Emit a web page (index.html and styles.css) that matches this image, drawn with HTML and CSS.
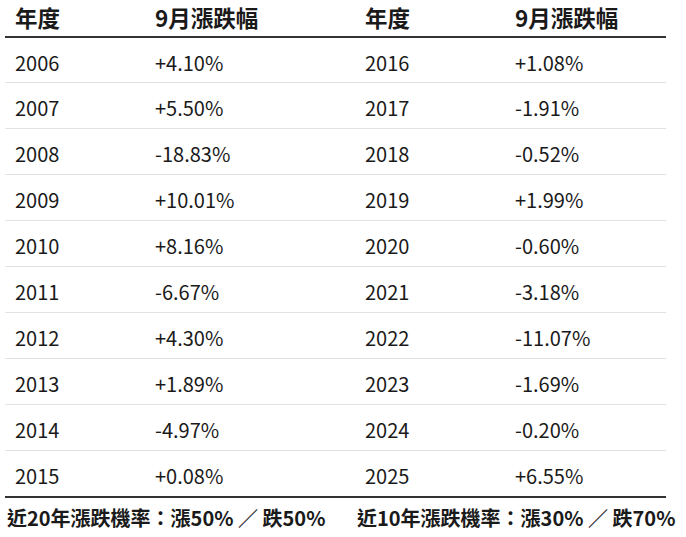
FILE: index.html
```html
<!DOCTYPE html>
<html lang="zh-Hant">
<head>
<meta charset="utf-8">
<title>9月漲跌幅</title>
<link rel="stylesheet" href="styles.css">
</head>
<body>
<div class="table">
  <div class="row head">
    <div class="cell">年度</div><div class="cell">9月漲跌幅</div><div class="cell">年度</div><div class="cell">9月漲跌幅</div>
  </div>
  <div class="row"><div class="cell">2006</div><div class="cell">+4.10%</div><div class="cell">2016</div><div class="cell">+1.08%</div></div>
  <div class="row"><div class="cell">2007</div><div class="cell">+5.50%</div><div class="cell">2017</div><div class="cell">-1.91%</div></div>
  <div class="row"><div class="cell">2008</div><div class="cell">-18.83%</div><div class="cell">2018</div><div class="cell">-0.52%</div></div>
  <div class="row"><div class="cell">2009</div><div class="cell">+10.01%</div><div class="cell">2019</div><div class="cell">+1.99%</div></div>
  <div class="row"><div class="cell">2010</div><div class="cell">+8.16%</div><div class="cell">2020</div><div class="cell">-0.60%</div></div>
  <div class="row"><div class="cell">2011</div><div class="cell">-6.67%</div><div class="cell">2021</div><div class="cell">-3.18%</div></div>
  <div class="row"><div class="cell">2012</div><div class="cell">+4.30%</div><div class="cell">2022</div><div class="cell">-11.07%</div></div>
  <div class="row"><div class="cell">2013</div><div class="cell">+1.89%</div><div class="cell">2023</div><div class="cell">-1.69%</div></div>
  <div class="row"><div class="cell">2014</div><div class="cell">-4.97%</div><div class="cell">2024</div><div class="cell">-0.20%</div></div>
  <div class="row last"><div class="cell">2015</div><div class="cell">+0.08%</div><div class="cell">2025</div><div class="cell">+6.55%</div></div>
  <div class="footer">
    <div class="note">近20年漲跌機率：漲50% ／ 跌50%</div>
    <div class="note">近10年漲跌機率：漲30% ／ 跌70%</div>
  </div>
</div>
</body>
</html>
```

FILE: styles.css
```css
html, body {
  margin: 0;
  padding: 0;
  background: #ffffff;
}
body {
  font-family: "Noto Sans CJK TC", "Noto Sans CJK SC", sans-serif;
  color: #1a1a1a;
}
.table {
  margin-left: 5px;
  width: 661px;
}
.row {
  display: grid;
  grid-template-columns: 140px 210px 150px 161px;
  align-items: center;
  box-sizing: border-box;
  height: 46px;
  border-bottom: 1px solid #e2e2e2;
  font-size: 20px;
  padding-top: 4px;
}
.cell {
  padding-left: 10px;
  white-space: nowrap;
}
.row.head {
  height: 38px;
  border-bottom: 2px solid #333333;
  font-weight: 700;
  font-size: 22.5px;
  padding-top: 0;
  padding-bottom: 3px;
}
.head + .row {
  height: 45px;
}
.row.last {
  height: 47px;
  border-bottom: 2px solid #333333;
}
.footer {
  display: grid;
  grid-template-columns: 350px 311px;
  align-items: center;
  height: 39px;
  font-size: 20px;
  font-weight: 700;
}
.note {
  padding-left: 2px;
  white-space: nowrap;
}
```
